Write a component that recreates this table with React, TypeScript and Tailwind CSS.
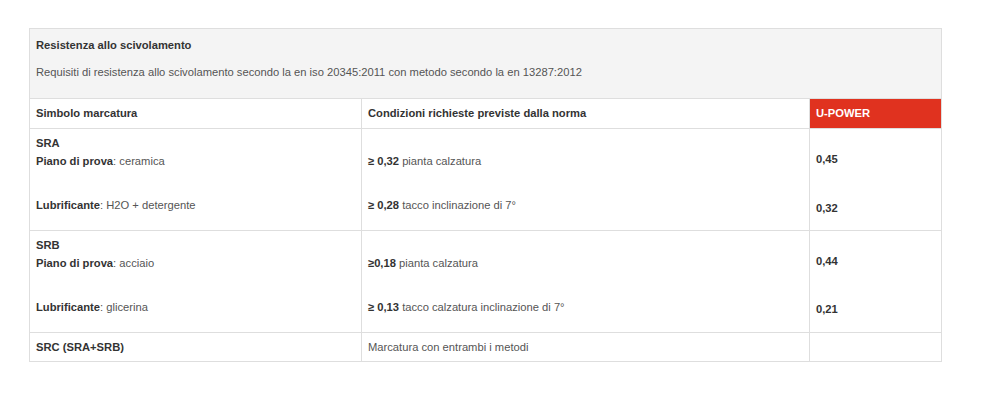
const rows = [
  {
    code: "SRA",
    surface: "ceramica",
    lube: "H2O + detergente",
    first: { gte: "≥ 0,32", text: "pianta calzatura" },
    second: { gte: "≥ 0,28", text: "tacco inclinazione di 7°" },
    values: ["0,45", "0,32"],
    gap: "mt-[31px]"
  },
  {
    code: "SRB",
    surface: "acciaio",
    lube: "glicerina",
    first: { gte: "≥0,18", text: "pianta calzatura" },
    second: { gte: "≥ 0,13", text: "tacco calzatura inclinazione di 7°" },
    values: ["0,44", "0,21"],
    gap: "mt-[30px]"
  }
]

export default function App() {
  return (
    <div className="min-h-[398px] bg-white pt-[28px] font-['Liberation_Sans',Arial,sans-serif] text-[11.2px] leading-[18px] text-[#555]">
      <div className="ml-[29px] w-[913px] border border-[#dedede]">
        <div className="h-[69px] bg-[#f4f4f4] px-[6px] pt-[7px]">
          <div className="font-bold text-[#333]">Resistenza allo scivolamento</div>
          <div className="mt-[9px]">
            Requisiti di resistenza allo scivolamento secondo la en iso 20345:2011 con metodo secondo la en 13287:2012
          </div>
        </div>

        <div className="grid grid-cols-[332px_448px_131px] border-t border-[#dedede] h-[30px] font-bold text-[#333]">
          <div className="border-r border-[#dedede] pl-[6px] pt-[5px]">Simbolo marcatura</div>
          <div className="border-r border-[#dedede] pl-[6px] pt-[5px]">
            Condizioni richieste previste dalla norma
          </div>
          <div className="bg-[#e0321f] pl-[6px] pt-[5px] text-white">U-POWER</div>
        </div>

        {rows.map(r => (
          <div
            key={r.code}
            className="grid h-[102px] grid-cols-[332px_448px_131px] border-t border-[#dedede]">
            <div className="border-r border-[#dedede] pl-[6px] pt-[5px]">
              <div className="font-bold text-[#333]">{r.code}</div>
              <div>
                <b className="text-[#333]">Piano di prova</b>: {r.surface}
              </div>
              <div className="mt-[26px]">
                <b className="text-[#333]">Lubrificante</b>: {r.lube}
              </div>
            </div>
            <div className="border-r border-[#dedede] pl-[6px] pt-[23px]">
              <div>
                <b className="text-[#333]">{r.first.gte}</b> {r.first.text}
              </div>
              <div className="mt-[26px]">
                <b className="text-[#333]">{r.second.gte}</b> {r.second.text}
              </div>
            </div>
            <div className="pl-[6px] pt-[21px] font-bold text-[#333]">
              <div>{r.values[0]}</div>
              <div className={r.gap}>{r.values[1]}</div>
            </div>
          </div>
        ))}

        <div className="grid h-[29px] grid-cols-[332px_448px_131px] border-t border-[#dedede]">
          <div className="border-r border-[#dedede] pl-[6px] pt-[5px] font-bold text-[#333]">
            SRC (SRA+SRB)
          </div>
          <div className="border-r border-[#dedede] pl-[6px] pt-[5px]">
            Marcatura con entrambi i metodi
          </div>
          <div />
        </div>
      </div>
    </div>
  )
}
